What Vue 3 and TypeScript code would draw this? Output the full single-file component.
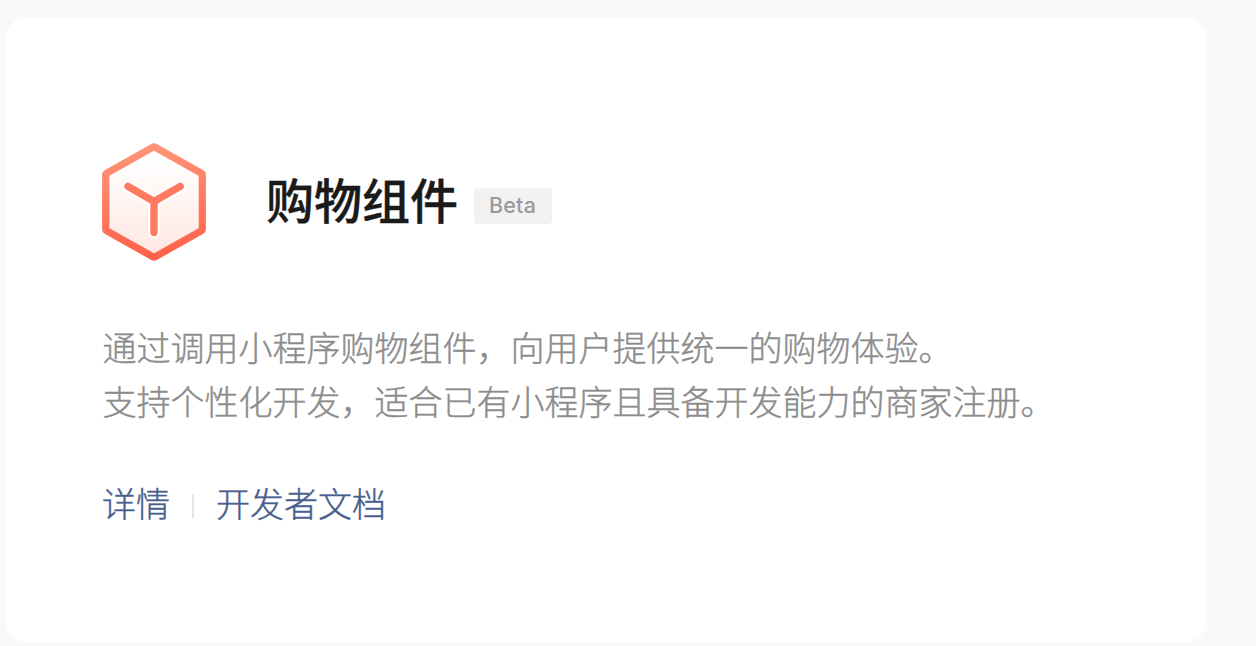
<script setup lang="ts">
interface CardLink {
	label: string
	href: string
}

const title = "购物组件"
const tag = "Beta"

const description: string[] = [
	"通过调用小程序购物组件，向用户提供统一的购物体验。",
	"支持个性化开发，适合已有小程序且具备开发能力的商家注册。",
]

const links: CardLink[] = [
	{ label: "详情", href: "#detail" },
	{ label: "开发者文档", href: "#docs" },
]
</script>

<template>
	<main class="page">
		<section class="card">
			<header class="card-header">
				<svg class="logo" viewBox="0 0 104 120" aria-hidden="true">
					<defs>
						<linearGradient id="edge" gradientUnits="userSpaceOnUse" x1="46" y1="0" x2="58" y2="120">
							<stop offset="0" stop-color="#ff967a" />
							<stop offset="1" stop-color="#ff5f48" />
						</linearGradient>
						<linearGradient id="face" gradientUnits="userSpaceOnUse" x1="52" y1="0" x2="52" y2="120">
							<stop offset="0.15" stop-color="#ffffff" />
							<stop offset="1" stop-color="#ffe5df" />
						</linearGradient>
					</defs>
					<path
						class="hexagon"
						d="M50.6 5.4 Q52 4.6 53.4 5.4 L99.2 31.2 Q100.3 31.8 100.3 33 V87 Q100.3 88.2 99.2 88.8 L53.4 114.6 Q52 115.4 50.6 114.6 L4.8 88.8 Q3.7 88.2 3.7 87 V33 Q3.7 31.8 4.8 31.2 Z"
						fill="url(#face)"
						stroke="url(#edge)" />
					<path class="halo" d="M26 44.4 L52 59.5 L78.2 44.4 M52 59.5 V90.5" />
					<path class="mark" d="M26 44.4 L52 59.5 L78.2 44.4 M52 59.5 V90.5" />
				</svg>
				<h1 class="title">{{ title }}</h1>
				<span class="tag">{{ tag }}</span>
			</header>

			<div class="description">
				<p v-for="line in description" :key="line">{{ line }}</p>
			</div>

			<nav class="links">
				<a v-for="link in links" :key="link.label" class="link" :href="link.href">{{ link.label }}</a>
			</nav>
		</section>
	</main>
</template>

<style>
body {
	background-color: #f9f9f9;
}
</style>

<style scoped>
.page {
	box-sizing: border-box;
	height: 646px;
	padding: 18px 50px 4px 6px;
	overflow: hidden;
	background-color: #f9f9f9;
	font-family: "Noto Sans CJK SC", sans-serif;
}

.card {
	box-sizing: border-box;
	height: 624px;
	padding: 124px 96px 0;
	border-radius: 20px;
	background-color: #fff;
}

.card-header {
	display: flex;
	align-items: center;
	height: 120px;
}

.logo {
	flex: none;
	width: 104px;
	height: 120px;
	margin-right: 60px;
}

.hexagon {
	stroke-width: 7.2;
	stroke-linejoin: round;
}

.halo,
.mark {
	fill: none;
	stroke-linecap: round;
	stroke-linejoin: round;
}

.halo {
	stroke: #fff;
	stroke-width: 11.5;
}

.mark {
	stroke: #ff7a61;
	stroke-width: 7.4;
}

.title {
	margin: 0 0 8px;
	font-size: 48px;
	font-weight: 500;
	line-height: 72px;
	color: #1a1a1a;
	-webkit-text-stroke: 0.4px #1a1a1a;
}

.tag {
	box-sizing: border-box;
	width: 78px;
	height: 36px;
	margin: 8px 0 0 16px;
	border-radius: 4px;
	background-color: #f2f2f2;
	color: #9a9a9a;
	font-family: Inter, sans-serif;
	font-size: 21.5px;
	font-weight: 500;
	line-height: 35px;
	letter-spacing: 0.2px;
	text-indent: -1px;
	text-align: center;
}

.description {
	margin-top: 58px;
	padding-left: 0.5px;
	color: #8c8c8c;
	font-size: 34px;
	font-weight: 300;
	line-height: 54px;
	-webkit-text-stroke: 0.4px #8c8c8c;
}

.description p {
	margin: 0;
	white-space: nowrap;
}

.links {
	display: flex;
	align-items: center;
	margin-top: 48px;
	font-size: 34px;
	font-weight: 300;
	line-height: 54px;
	-webkit-text-stroke: 0.4px #475e8e;
}

.link {
	display: flex;
	align-items: center;
	color: #475e8e;
	text-decoration: none;
}

.link + .link::before {
	content: "";
	width: 2px;
	height: 24px;
	margin: 6px 22px 0;
	background-color: #e4e4e4;
}
</style>
